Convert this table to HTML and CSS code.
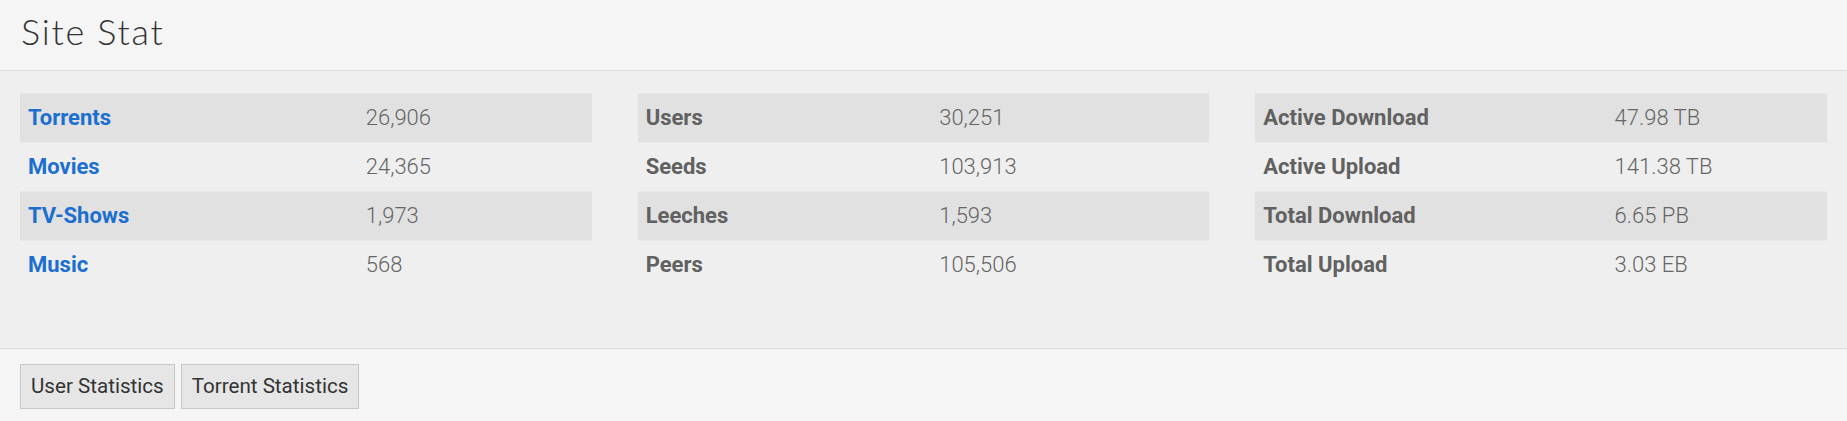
FILE: index.html
```html
<!DOCTYPE html>
<html>
<head>
<meta charset="utf-8">
<link rel="stylesheet" href="styles.css">
</head>
<body>
<div class="panel">
  <div class="panel-heading"><h3 class="title">Site Stat</h3></div>
  <div class="panel-body">
    <div class="cols">
      <table class="stat">
        <tr><td class="label"><a href="#">Torrents</a></td><td class="val">26,906</td></tr>
        <tr><td class="label"><a href="#">Movies</a></td><td class="val">24,365</td></tr>
        <tr><td class="label"><a href="#">TV-Shows</a></td><td class="val">1,973</td></tr>
        <tr><td class="label"><a href="#">Music</a></td><td class="val">568</td></tr>
      </table>
      <table class="stat">
        <tr><td class="label">Users</td><td class="val">30,251</td></tr>
        <tr><td class="label">Seeds</td><td class="val">103,913</td></tr>
        <tr><td class="label">Leeches</td><td class="val">1,593</td></tr>
        <tr><td class="label">Peers</td><td class="val">105,506</td></tr>
      </table>
      <table class="stat">
        <tr><td class="label">Active Download</td><td class="val">47.98 TB</td></tr>
        <tr><td class="label">Active Upload</td><td class="val">141.38 TB</td></tr>
        <tr><td class="label">Total Download</td><td class="val">6.65 PB</td></tr>
        <tr><td class="label">Total Upload</td><td class="val">3.03 EB</td></tr>
      </table>
    </div>
  </div>
  <div class="panel-footer">
    <button class="btn">User Statistics</button>
    <button class="btn">Torrent Statistics</button>
  </div>
</div>
</body>
</html>
```
FILE: styles.css
```css
html, body {
  margin: 0;
  padding: 0;
  background: #efefef;
  font-family: Roboto, "Liberation Sans", sans-serif;
}
.panel {
  display: flex;
  flex-direction: column;
  min-height: 421px;
}
.panel-heading {
  background: #f5f5f5;
  border-bottom: 1px solid #dcdcdc;
  height: 71px;
  display: flex;
  align-items: center;
  padding: 0 21px 8px;
  box-sizing: border-box;
}
.title {
  margin: 0;
  font-family: Lato, "Open Sans", sans-serif;
  font-weight: 300;
  font-size: 36px;
  line-height: 1;
  color: #333;
  letter-spacing: 1.7px;
}
.panel-body {
  background: #efefef;
  padding: 22px 20px 0;
  height: 277px;
  box-sizing: border-box;
}
.cols {
  display: grid;
  grid-template-columns: 1fr 1fr 1fr;
  column-gap: 46px;
}
.stat {
  width: 100%;
  border-collapse: collapse;
  font-size: 22px;
  line-height: 32px;
}
.stat td {
  padding: 8px;
  border-top: 1px solid #e8e8e8;
}
.stat tr:nth-child(odd) td {
  background: #e1e1e1;
}
.label {
  font-weight: 700;
  color: #616161;
}
.label a {
  color: #1c6fcf;
  text-decoration: none;
}
.val {
  font-weight: 300;
  color: #666;
}
.panel-footer {
  flex: 1;
  background: #f5f5f5;
  border-top: 1px solid #dcdcdc;
  padding: 15px 20px 12px;
  display: flex;
  gap: 6px;
  align-items: flex-start;
}
.btn {
  font-family: Roboto, "Liberation Sans", sans-serif;
  font-size: 20.6px;
  line-height: 27px;
  padding: 8px 10px;
  background: #e6e6e6;
  border: 1px solid #c8c8c8;
  color: #333;
  border-radius: 0;
  margin: 0;
}
```
